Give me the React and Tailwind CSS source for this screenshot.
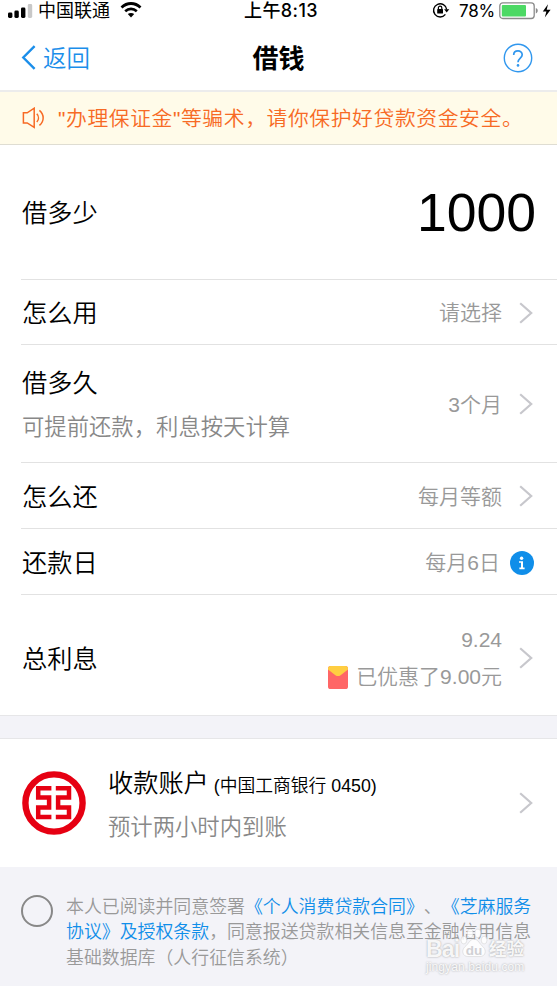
import React from 'react';

function Chevron() {
  return (
    <svg className="w-[14px] h-[22px] ml-[17px] mt-[-1px] shrink-0" viewBox="0 0 14 22" fill="none">
      <path d="M1.2 1.2 L12.2 11 L1.2 20.8" stroke="#c7c7cc" strokeWidth="2.2" />
    </svg>
  );
}

function StatusBar() {
  return (
    <div className="h-[22px] flex items-center relative leading-[22px]">
      <svg className="w-[26px] h-[16px] ml-[7px] mt-[2px]" viewBox="0 0 26 16">
        <rect x="1" y="8.5" width="4.4" height="5.5" rx="1.4" fill="#000" />
        <rect x="7.4" y="6.5" width="4.4" height="7.5" rx="1.4" fill="#000" />
        <rect x="14" y="3.5" width="4.4" height="10.5" rx="1.4" fill="#000" />
        <rect x="20.8" y="0" width="4.4" height="14" rx="1.4" fill="#c8c8c8" />
      </svg>
      <span className="ml-[5px] text-[18px] font-normal">中国联通</span>
      <svg className="w-[22px] h-[16px] ml-[10px] mb-[2px]" viewBox="0 0 22 16" fill="none" stroke="#000">
        <path d="M1.5 5.4 C7 .2 15 .2 20.5 5.4" strokeWidth="2.8" />
        <path d="M5.2 9.2 C8.6 6.1 13.4 6.1 16.8 9.2" strokeWidth="2.6" />
        <path d="M11 15.4 L7.8 12.1 C9.6 10.5 12.4 10.5 14.2 12.1 Z" fill="#000" stroke="none" />
      </svg>
      <span className="absolute left-[244px] top-0 text-[18px] font-medium tracking-[0.4px] font-[Inter,'Noto_Sans_CJK_SC',sans-serif]">
        上午8:13
      </span>
      <div className="ml-auto mr-[4px] flex items-center">
        <svg className="w-[18px] h-[16px] mb-[2px]" viewBox="0 0 18 16" fill="none">
          <path d="M13.4 12.4 A6.6 6.6 0 1 1 14.7 7.5" stroke="#000" strokeWidth="1.4" />
          <path d="M12.1 7.2 H17.3 L14.7 10.6 Z" fill="#000" />
          <rect x="5.2" y="7.1" width="5.8" height="4.4" rx=".6" fill="#000" />
          <path d="M6.4 7.4 V5.8 a1.7 1.7 0 0 1 3.4 0 V7.4" stroke="#000" strokeWidth="1.2" />
        </svg>
        <span className="ml-[9px] w-[36px] text-[17px] tracking-[-0.2px] font-normal font-[Inter,sans-serif]">78%</span>
        <svg className="w-[54px] h-[18px] ml-[4px]" viewBox="0 0 54 18">
          <rect x=".8" y=".9" width="34.4" height="15.6" rx="3" fill="#fff" stroke="#8a8a8a" strokeWidth="1.3" />
          <rect x="2.8" y="3" width="24.2" height="11.4" rx="1" fill="#4cd964" />
          <path d="M36.8 6 c2.6 .8 2.6 4.6 0 5.4 Z" fill="#8a8a8a" />
          <path d="M49 2.2 L43.8 9.4 H47.4 L45.8 15.4 L51.6 7.7 H47.7 Z" fill="#000" />
        </svg>
      </div>
    </div>
  );
}

function NavBar() {
  return (
    <div className="h-[70px] border-b-2 border-[#ececec] flex items-center justify-between relative pl-[21px] pr-[24px]">
      <div className="flex items-center text-[#1b8eea] pt-[3px]">
        <svg className="w-[15px] h-[25px]" viewBox="0 0 15 25" fill="none">
          <path d="M13.6 1.2 L2.3 12.5 L13.6 23.8" stroke="#1b8eea" strokeWidth="2.4" />
        </svg>
        <span className="ml-[7px] pt-[3px] text-[23.5px] leading-[30px]">返回</span>
      </div>
      <h1 className="absolute inset-x-0 top-[20px] text-center text-[26px] leading-[34px] font-bold">借钱</h1>
      <svg className="w-[30px] h-[30px] mt-[3px]" viewBox="0 0 30 30" fill="none" stroke="#3097ee">
        <circle cx="15" cy="15" r="13.7" strokeWidth="1.4" />
        <path d="M10.7 12 C10.7 6.5 19.2 6.5 19.2 11.8 C19.2 15 15 15.2 15 19.3" strokeWidth="1.7" />
        <circle cx="15" cy="22.4" r="1.3" fill="#3097ee" stroke="none" />
      </svg>
    </div>
  );
}

function Notice() {
  return (
    <div className="h-[53px] bg-[#fffbe9] border-b border-[#dfddd2] flex items-center pl-[22px] text-[#f76a24]">
      <svg className="w-[24px] h-[22px]" viewBox="0 0 24 22" fill="none" stroke="#f76a24" strokeWidth="1.5">
        <path d="M1.4 5.8 H5.2 L12.2 1.2 V20.4 L5.2 15.9 H1.4 Z" />
        <path d="M14.8 6.8 C17 9.2 17 12.6 14.8 15" />
        <path d="M17.4 3.4 C22.4 7.6 22.4 14.2 17.4 18.4" />
      </svg>
      <span className="ml-[12px] pt-[1px] text-[20.8px] tracking-[0.6px] leading-[30px] whitespace-nowrap">
        "办理保证金"等骗术，请你保护好贷款资金安全。
      </span>
    </div>
  );
}

function Row({ label, hint, className, last, children }) {
  return (
    <div className={(last ? '' : 'ml-[21px] border-b border-[#e2e2e2] ') + className}>
      <div className={(last ? 'pl-[22px] pt-[7px] ' : 'pl-px pt-[2px] ') + 'h-full flex items-center justify-between pr-[24px]'}>
        <div>
          <div className="text-[25.2px] leading-[34px] whitespace-nowrap">{label}</div>
          {hint && <div className="mt-[13px] text-[22.35px] leading-[30px] text-[#888] whitespace-nowrap">{hint}</div>}
        </div>
        {children}
      </div>
    </div>
  );
}

function Value({ children }) {
  return (
    <div className="flex items-center text-[21px] leading-[30px] text-[#999] whitespace-nowrap">
      {children}
      <Chevron />
    </div>
  );
}

function RedPacket() {
  return (
    <svg className="w-[20px] h-[23px] mr-[8px]" viewBox="0 0 20 23">
      <rect width="20" height="23" rx="2.6" fill="#ff6666" />
      <path d="M0 3.6 V2.6 A2.6 2.6 0 0 1 2.6 0 H17.4 A2.6 2.6 0 0 1 20 2.6 V3.6 L12.6 9.2 Q10 11 7.4 9.2 Z" fill="#ffce41" />
    </svg>
  );
}

function BankLogo() {
  return (
    <svg className="w-[64px] h-[64px] shrink-0" viewBox="0 0 64 64" fill="none">
      <circle cx="32" cy="32" r="28.6" stroke="#e60012" strokeWidth="6.4" />
      <g stroke="#e60012" strokeWidth="4.5">
        <path d="M29.4 17.2 H16.2 V26.6 H27.1 V36.6 H16.2 V45.9 H29.4" />
        <path d="M33.8 17.2 H47 V26.6 H36.1 V36.6 H47 V45.9 H33.8" />
      </g>
    </svg>
  );
}

function Watermark() {
  return (
    <div className="absolute left-[426px] top-[931px] w-[104px] text-white/90 font-bold [text-shadow:0_0_2px_#999]">
      <div className="flex items-center h-[32px] pt-[4px]">
        <span className="w-[34px] text-[23px] leading-[26px] tracking-[-0.8px]">Bai</span>
        <svg className="w-[28px] h-[30px] mt-[-12px] shrink-0" viewBox="0 0 29 30">
          <g fill="#fff" fillOpacity=".8" stroke="#ccc" strokeWidth=".5">
            <ellipse cx="4" cy="12" rx="3" ry="4" />
            <ellipse cx="10.5" cy="5" rx="3" ry="4.4" />
            <ellipse cx="18.5" cy="5" rx="3" ry="4.4" />
            <ellipse cx="25" cy="12" rx="3" ry="4" />
            <path d="M14.5 11 C19 11 20 16 24 19 C28 23 26 29 21 29 H8 C3 29 1 23 5 19 C9 16 10 11 14.5 11 Z" />
          </g>
          <text className="[text-shadow:none]" x="14.5" y="27" fontSize="14" textAnchor="middle" fill="#d0d0d4">du</text>
        </svg>
        <span className="ml-[1px] text-[17.5px] leading-[26px] whitespace-nowrap">经验</span>
      </div>
      <div className="mt-[-3px] text-[12px] leading-[14px] tracking-[0.1px] font-normal">jingyan.baidu.com</div>
    </div>
  );
}

function Agreement() {
  return (
    <div className="h-[119px] bg-[#f3f3f8] flex pl-[21px] pt-[28px]">
      <span className="w-[32px] h-[32px] rounded-full border-2 border-[#888] shrink-0" />
      <p className="ml-[13px] text-[17.9px] leading-[25.3px] text-[#999] whitespace-nowrap">
        本人已阅读并同意签署<span className="text-[#108ee9]">《个人消费贷款合同》</span>、<span className="text-[#108ee9]">《芝麻服务</span>
        <br />
        <span className="text-[#108ee9]">协议》及授权条款</span>，同意报送贷款相关信息至金融信用信息
        <br />
        基础数据库（人行征信系统）
      </p>
    </div>
  );
}

export default function App() {
  return (
    <div
      lang="zh-CN"
      className="relative w-[557px] h-[986px] overflow-hidden bg-white text-black font-[350] font-['Liberation_Sans','Noto_Sans_CJK_SC',sans-serif] [text-spacing-trim:space-all]"
    >
      <StatusBar />
      <NavBar />
      <Notice />
      <Row label="借多少" className="h-[135px]">
        <span className="text-[53.5px] leading-[60px] mr-[-3px]">1000</span>
      </Row>
      <Row label="怎么用" className="h-[65px]">
        <Value>请选择</Value>
      </Row>
      <Row label="借多久" hint="可提前还款，利息按天计算" className="h-[118px]">
        <Value>3个月</Value>
      </Row>
      <Row label="怎么还" className="h-[66px]">
        <Value>每月等额</Value>
      </Row>
      <Row label="还款日" className="h-[66px]">
        <div className="flex items-center text-[21px] leading-[30px] text-[#999]">
          每月6日
          <svg className="w-[24px] h-[24px] ml-[10px] mr-[-1px]" viewBox="0 0 24 24">
            <circle cx="12" cy="12" r="12" fill="#108ee9" />
            <circle cx="11.6" cy="7.3" r="1.7" fill="#fff" />
            <path d="M9 10.2 H13 V16.6 H14.6 V18.2 H9.4 V16.6 H11 V11.8 H9 Z" fill="#fff" />
          </svg>
        </div>
      </Row>
      <Row label="总利息" className="h-[120px]" last>
        <Value>
          <div className="flex flex-col items-end gap-[7px]">
            <span>9.24</span>
            <span className="flex items-center">
              <RedPacket />
              已优惠了9.00元
            </span>
          </div>
        </Value>
      </Row>
      <div className="h-[24px] bg-[#f3f3f8] border-y border-[#e6e6e8]" />
      <div className="h-[128px] flex items-center pl-[22px] pr-[24px]">
        <BankLogo />
        <div className="ml-[22px] pt-[2px] flex-1 whitespace-nowrap">
          <div className="leading-[34px]">
            <span className="text-[25.2px]">收款账户</span>
            <span className="ml-[5px] text-[17.8px]">(中国工商银行 0450)</span>
          </div>
          <div className="mt-[9px] text-[22.35px] leading-[30px] text-[#888]">预计两小时内到账</div>
        </div>
        <Chevron />
      </div>
      <Agreement />
      <Watermark />
    </div>
  );
}
